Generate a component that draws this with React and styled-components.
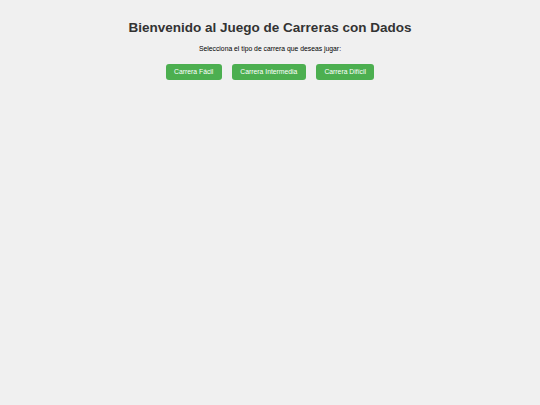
import React from 'react';
import styled, { createGlobalStyle } from 'styled-components';

const GlobalStyle = createGlobalStyle`
  html, body {
    margin: 0;
    padding: 0;
    background-color: #f0f0f0;
    font-family: 'Liberation Sans', Arial, sans-serif;
  }
`;

const Page = styled.div`
  display: flex;
  flex-direction: column;
  align-items: center;
  padding-top: 19px;
  min-height: 405px;
  box-sizing: border-box;
`;

const Title = styled.h1`
  margin: 0;
  font-size: 13.5px;
  line-height: 18px;
  font-weight: 700;
  color: #333333;
`;

const Subtitle = styled.p`
  margin: 7px 0 0;
  font-size: 6.8px;
  line-height: 9px;
  color: #000000;
`;

const ButtonRow = styled.div`
  display: flex;
  gap: 10px;
  margin-top: 11px;
`;

const RaceButton = styled.button`
  height: 16px;
  padding: 0 8.5px;
  border: none;
  border-radius: 3px;
  background-color: #4caf50;
  color: #ffffff;
  font-family: 'Liberation Sans', Arial, sans-serif;
  font-size: 6.8px;
  line-height: 16px;
  cursor: pointer;
  &:hover {
    background-color: #45a049;
  }
`;

const races = ['Carrera Fácil', 'Carrera Intermedia', 'Carrera Difícil'];

export default function App() {
  return (
    <>
      <GlobalStyle />
      <Page>
        <Title>Bienvenido al Juego de Carreras con Dados</Title>
        <Subtitle>Selecciona el tipo de carrera que deseas jugar:</Subtitle>
        <ButtonRow>
          {races.map((r) => (
            <RaceButton key={r}>{r}</RaceButton>
          ))}
        </ButtonRow>
      </Page>
    </>
  );
}
